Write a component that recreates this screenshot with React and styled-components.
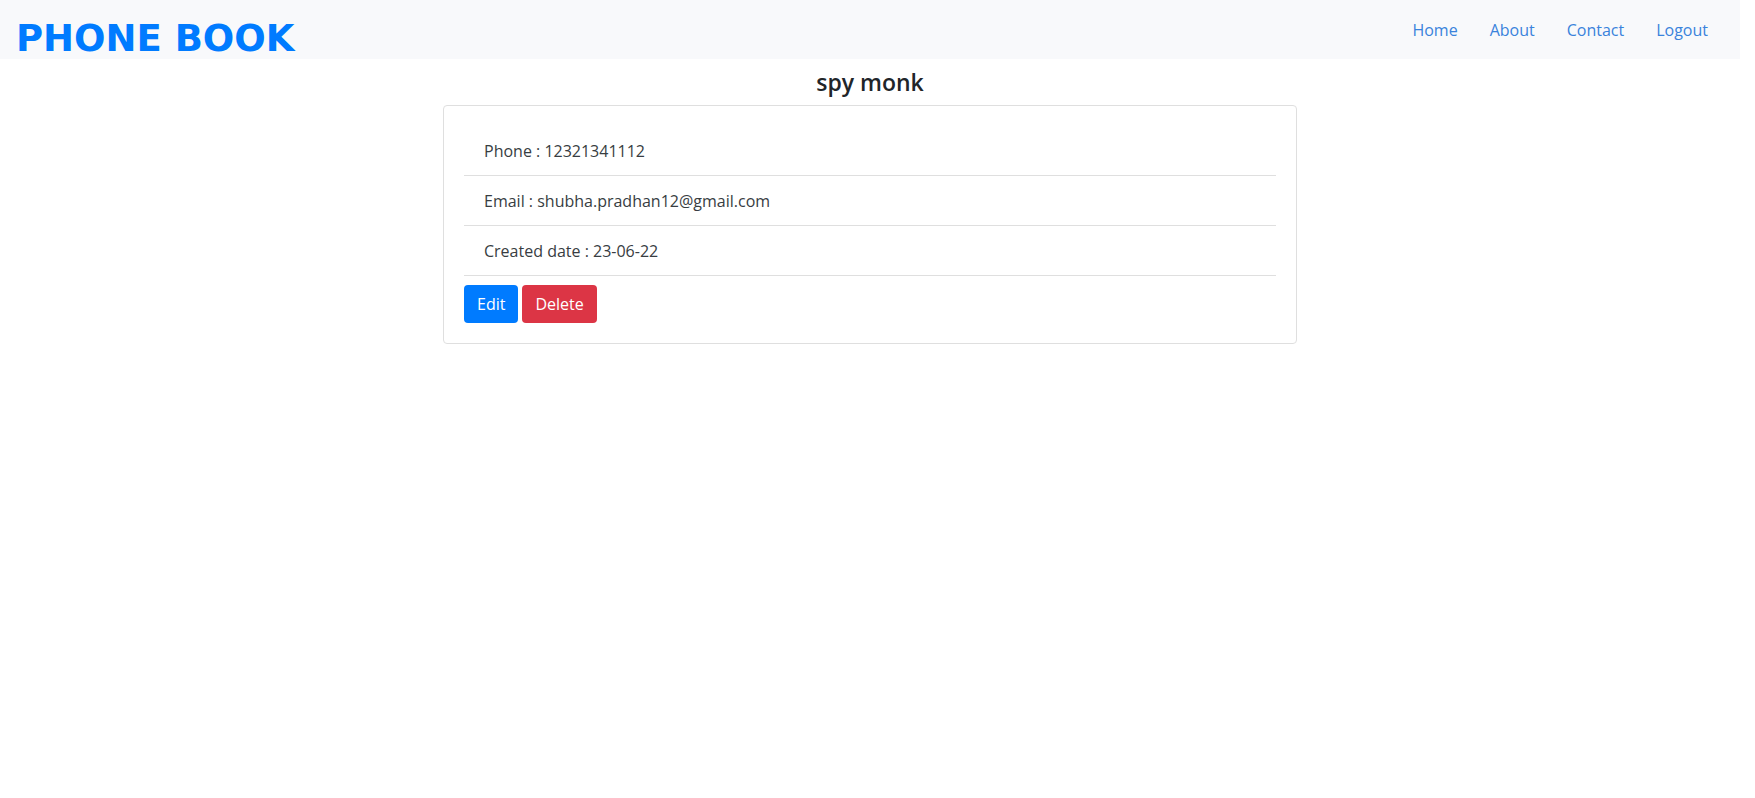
import React from "react";
import styled, { createGlobalStyle } from "styled-components";

const GlobalStyle = createGlobalStyle`
  *, *::before, *::after { box-sizing: border-box; }
  body {
    margin: 0;
    background: #fff;
    color: #212529;
    font-family: "Segoe UI", "Open Sans", "Noto Sans", sans-serif;
    font-size: 16px;
    line-height: 25px;
  }
`;

const Page = styled.div`
  margin-right: 15px;
`;

const Header = styled.header`
  display: flex;
  align-items: flex-start;
  justify-content: space-between;
  height: 59px;
  padding: 0 16px;
  background: #f8f9fb;
`;

const Brand = styled.a`
  padding-top: 15px;
  color: #007bff;
  font-family: "DejaVu Sans", sans-serif;
  font-size: 37px;
  font-weight: 700;
  line-height: 48px;
  text-decoration: none;
  white-space: nowrap;
`;

const Nav = styled.nav`
  display: flex;
`;

const NavLink = styled.a`
  padding: 18px 16px 16px;
  color: #3a83dc;
  text-decoration: none;
`;

const Main = styled.main`
  width: 50%;
  margin: 0 auto;
  padding: 0 8px;
`;

const Title = styled.h1`
  margin: 8px 0;
  font-size: 23px;
  font-weight: 600;
  line-height: 30px;
  text-align: center;
`;

const Card = styled.section`
  padding: 20px;
  border: 1px solid #dfdfdf;
  border-radius: 4px;
`;

const Details = styled.ul`
  margin: 0 0 9px;
  padding: 0;
  list-style: none;
`;

const Detail = styled.li`
  padding: 13px 20px 11px;
  border-bottom: 1px solid #dfdfdf;
  color: #383d42;
`;

const Actions = styled.div`
  display: flex;
  gap: 4px;
`;

const Button = styled.button`
  height: 38px;
  padding: 0 13px;
  border: 0;
  border-radius: 4px;
  background: ${({ $danger }) => ($danger ? "#dc3545" : "#007bff")};
  color: #fff;
  font: inherit;
  cursor: pointer;
`;

const links = ["Home", "About", "Contact", "Logout"];

const details = [
  ["Phone", "12321341112"],
  ["Email", "shubha.pradhan12@gmail.com"],
  ["Created date", "23-06-22"],
];

export default function App() {
  return (
    <>
      <GlobalStyle />
      <Page>
        <Header>
          <Brand href="#home">PHONE BOOK</Brand>
          <Nav>
            {links.map((name) => (
              <NavLink key={name} href={`#${name.toLowerCase()}`}>{name}</NavLink>
            ))}
          </Nav>
        </Header>
        <Main>
          <Title>spy monk</Title>
          <Card>
            <Details>
              {details.map(([label, value]) => (
                <Detail key={label}>{`${label} : ${value}`}</Detail>
              ))}
            </Details>
            <Actions>
              <Button type="button">Edit</Button>
              <Button type="button" $danger>Delete</Button>
            </Actions>
          </Card>
        </Main>
      </Page>
    </>
  );
}
